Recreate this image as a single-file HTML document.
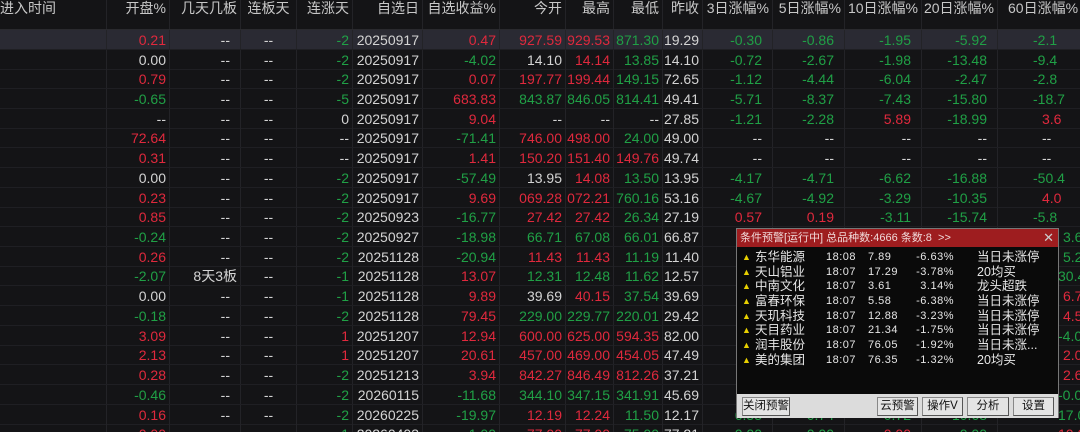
<!DOCTYPE html>
<html><head><meta charset="utf-8"><style>
*{margin:0;padding:0;box-sizing:border-box}
html,body{width:1080px;height:432px;overflow:hidden}
body{background:#141416;font-family:"Liberation Sans","Noto Sans CJK SC",sans-serif;font-size:14px;color:#d4d4d4;position:relative}
.row{position:absolute;left:0;width:1080px;height:20px;display:flex;border-bottom:1px solid #1f1f23}
.row>div{display:flex;justify-content:flex-end;align-items:center;overflow:hidden;white-space:nowrap;padding-right:3px;border-right:1px solid #232327;height:100%;flex-shrink:0}
.row>div:nth-child(1){width:107px;justify-content:flex-start;padding-left:0}
.row>div:nth-child(2){width:63px}
.row>div:nth-child(3){width:71px;padding-right:10px}
.row>div:nth-child(4){width:56px;justify-content:center;padding-right:0}
.row>div:nth-child(5){width:56px}
.row>div:nth-child(6){width:70px}
.row>div:nth-child(7){width:77px}
.row>div:nth-child(8){width:66px}
.row>div:nth-child(9){width:48px}
.row>div:nth-child(10){width:49px}
.row>div:nth-child(11){width:40px}
.row>div:nth-child(12){width:70px;padding-right:10px}
.row>div:nth-child(13){width:72px;padding-right:10px}
.row>div:nth-child(14){width:77px;padding-right:10px}
.row>div:nth-child(15){width:76px;padding-right:10px}
.row>div:nth-child(16){width:82px;justify-content:flex-start;padding-left:35px;border-right:none}
.row>div.pz:nth-child(16){padding-left:44px}
.row>div.bp:nth-child(16){padding-left:65px}
.row>div.bn:nth-child(16){padding-left:60px}
.hd{top:0;height:30px;border-bottom:1px solid #2a2a2e}
.hd>div{align-items:flex-start;color:#c8c8c8;line-height:16px}
.hd>div:nth-child(16){padding-left:10px}
.sel{background:#2a2a33}
.r{color:#e0293d}.g{color:#20a046}.w{color:#dcdcdc}
.pop{position:absolute;left:736px;top:228px;width:323px;height:190px;background:#0a0a0a;border:1px solid #777;font-size:12px}
.tt{height:18px;background:#9e1d1f;color:#f0d8d8;font-size:11px;line-height:18px;padding-left:3px;position:relative;white-space:nowrap}
.tt .x{position:absolute;right:4px;top:0;color:#ccc;font-size:13px}
.it{position:absolute;left:0;height:14px;width:100%;color:#e6e6e6;white-space:nowrap;line-height:14px}
.it span{position:absolute}
.it .ic{left:5px;color:#e8d000;font-size:9px}
.it .n{left:18px;font-size:12.5px}
.it .t{left:89px;font-size:11px;letter-spacing:.5px}
.it .p{left:131px;font-size:11px;letter-spacing:.5px}
.it .c{right:104px;font-size:11px;letter-spacing:.5px}
.it .m{left:240px;font-size:12.5px}
.bar{position:absolute;left:0;top:165px;width:100%;height:24px;background:#dcdcdc}
.bt{position:absolute;top:3px;height:19px;background:#e4e4e4;border:1px solid #888;border-right-color:#555;border-bottom-color:#555;color:#111;font-size:11.5px;line-height:17px;text-align:center;white-space:nowrap;overflow:hidden}
</style></head><body>
<div class="row hd"><div>进入时间</div><div>开盘%</div><div style="padding-right:3px">几天几板</div><div>连板天</div><div>连涨天</div><div>自选日</div><div>自选收益%</div><div>今开</div><div>最高</div><div>最低</div><div>昨收</div><div style="padding-right:3px">3日涨幅%</div><div style="padding-right:3px">5日涨幅%</div><div style="padding-right:3px">10日涨幅%</div><div style="padding-right:3px">20日涨幅%</div><div>60日涨幅%</div></div>

<div class="row sel" style="top:30px"><div></div><div class="r">0.21</div><div>--</div><div>--</div><div class="g">-2</div><div>20250917</div><div class="r">0.47</div><div class="r">927.59</div><div class="r">929.53</div><div class="g">871.30</div><div>19.29</div><div class="g">-0.30</div><div class="g">-0.86</div><div class="g">-1.95</div><div class="g">-5.92</div><div class="g">-2.1</div></div>
<div class="row" style="top:50px"><div></div><div>0.00</div><div>--</div><div>--</div><div class="g">-2</div><div>20250917</div><div class="g">-4.02</div><div>14.10</div><div class="r">14.14</div><div class="g">13.85</div><div>14.10</div><div class="g">-0.72</div><div class="g">-2.67</div><div class="g">-1.98</div><div class="g">-13.48</div><div class="g">-9.4</div></div>
<div class="row" style="top:69px"><div></div><div class="r">0.79</div><div>--</div><div>--</div><div class="g">-2</div><div>20250917</div><div class="r">0.07</div><div class="r">197.77</div><div class="r">199.44</div><div class="g">149.15</div><div>72.65</div><div class="g">-1.12</div><div class="g">-4.44</div><div class="g">-6.04</div><div class="g">-2.47</div><div class="g">-2.8</div></div>
<div class="row" style="top:89px"><div></div><div class="g">-0.65</div><div>--</div><div>--</div><div class="g">-5</div><div>20250917</div><div class="r">683.83</div><div class="g">843.87</div><div class="g">846.05</div><div class="g">814.41</div><div>49.41</div><div class="g">-5.71</div><div class="g">-8.37</div><div class="g">-7.43</div><div class="g">-15.80</div><div class="g">-18.7</div></div>
<div class="row" style="top:109px"><div></div><div>--</div><div>--</div><div>--</div><div>0</div><div>20250917</div><div class="r">9.04</div><div>--</div><div>--</div><div>--</div><div>27.85</div><div class="g">-1.21</div><div class="g">-2.28</div><div class="r">5.89</div><div class="g">-18.99</div><div class="r pz">3.6</div></div>
<div class="row" style="top:128px"><div></div><div class="r">72.64</div><div>--</div><div>--</div><div>--</div><div>20250917</div><div class="g">-71.41</div><div class="r">746.00</div><div class="r">498.00</div><div class="g">24.00</div><div>49.00</div><div>--</div><div>--</div><div>--</div><div>--</div><div class="pz">--</div></div>
<div class="row" style="top:148px"><div></div><div class="r">0.31</div><div>--</div><div>--</div><div>--</div><div>20250917</div><div class="r">1.41</div><div class="r">150.20</div><div class="r">151.40</div><div class="r">149.76</div><div>49.74</div><div>--</div><div>--</div><div>--</div><div>--</div><div class="pz">--</div></div>
<div class="row" style="top:168px"><div></div><div>0.00</div><div>--</div><div>--</div><div class="g">-2</div><div>20250917</div><div class="g">-57.49</div><div>13.95</div><div class="r">14.08</div><div class="g">13.50</div><div>13.95</div><div class="g">-4.17</div><div class="g">-4.71</div><div class="g">-6.62</div><div class="g">-16.88</div><div class="g">-50.4</div></div>
<div class="row" style="top:188px"><div></div><div class="r">0.23</div><div>--</div><div>--</div><div class="g">-2</div><div>20250917</div><div class="r">9.69</div><div class="r">069.28</div><div class="r">072.21</div><div class="g">760.16</div><div>53.16</div><div class="g">-4.67</div><div class="g">-4.92</div><div class="g">-3.29</div><div class="g">-10.35</div><div class="r pz">4.0</div></div>
<div class="row" style="top:207px"><div></div><div class="r">0.85</div><div>--</div><div>--</div><div class="g">-2</div><div>20250923</div><div class="g">-16.77</div><div class="r">27.42</div><div class="r">27.42</div><div class="g">26.34</div><div>27.19</div><div class="r">0.57</div><div class="r">0.19</div><div class="g">-3.11</div><div class="g">-15.74</div><div class="g">-5.8</div></div>
<div class="row" style="top:227px"><div></div><div class="g">-0.24</div><div>--</div><div>--</div><div class="g">-2</div><div>20250927</div><div class="g">-18.98</div><div class="g">66.71</div><div class="g">67.08</div><div class="g">66.01</div><div>66.87</div><div></div><div></div><div></div><div></div><div class="g bp">3.6</div></div>
<div class="row" style="top:247px"><div></div><div class="r">0.26</div><div>--</div><div>--</div><div class="g">-2</div><div>20251128</div><div class="g">-20.94</div><div class="r">11.43</div><div class="r">11.43</div><div class="g">11.19</div><div>11.40</div><div></div><div></div><div></div><div></div><div class="g bp">5.2</div></div>
<div class="row" style="top:266px"><div></div><div class="g">-2.07</div><div style="padding-right:3px">8天3板</div><div>--</div><div class="g">-1</div><div>20251128</div><div class="r">13.07</div><div class="g">12.31</div><div class="g">12.48</div><div class="g">11.62</div><div>12.57</div><div></div><div></div><div></div><div></div><div class="g bn">30.4</div></div>
<div class="row" style="top:286px"><div></div><div>0.00</div><div>--</div><div>--</div><div class="g">-1</div><div>20251128</div><div class="r">9.89</div><div>39.69</div><div class="r">40.15</div><div class="g">37.54</div><div>39.69</div><div></div><div></div><div></div><div></div><div class="r bp">6.7</div></div>
<div class="row" style="top:306px"><div></div><div class="g">-0.18</div><div>--</div><div>--</div><div class="g">-2</div><div>20251128</div><div class="r">79.45</div><div class="g">229.00</div><div class="g">229.77</div><div class="g">220.01</div><div>29.42</div><div></div><div></div><div></div><div></div><div class="r bp">4.5</div></div>
<div class="row" style="top:326px"><div></div><div class="r">3.09</div><div>--</div><div>--</div><div class="r">1</div><div>20251207</div><div class="r">12.94</div><div class="r">600.00</div><div class="r">625.00</div><div class="r">594.35</div><div>82.00</div><div></div><div></div><div></div><div></div><div class="g bn">-4.0</div></div>
<div class="row" style="top:345px"><div></div><div class="r">2.13</div><div>--</div><div>--</div><div class="r">1</div><div>20251207</div><div class="r">20.61</div><div class="r">457.00</div><div class="r">469.00</div><div class="r">454.05</div><div>47.49</div><div></div><div></div><div></div><div></div><div class="r bp">2.0</div></div>
<div class="row" style="top:365px"><div></div><div class="r">0.28</div><div>--</div><div>--</div><div class="g">-2</div><div>20251213</div><div class="r">3.94</div><div class="r">842.27</div><div class="r">846.49</div><div class="r">812.26</div><div>37.21</div><div></div><div></div><div></div><div></div><div class="r bp">2.6</div></div>
<div class="row" style="top:385px"><div></div><div class="g">-0.46</div><div>--</div><div>--</div><div class="g">-2</div><div>20260115</div><div class="g">-11.68</div><div class="g">344.10</div><div class="g">347.15</div><div class="g">341.91</div><div>45.69</div><div></div><div></div><div></div><div></div><div class="g bn">-0.0</div></div>
<div class="row" style="top:405px"><div></div><div class="r">0.16</div><div>--</div><div>--</div><div class="g">-2</div><div>20260225</div><div class="g">-19.97</div><div class="r">12.19</div><div class="r">12.24</div><div class="g">11.50</div><div>12.17</div><div class="g">6.55</div><div class="g">0.74</div><div class="g">0.72</div><div class="g">10.68</div><div class="g bn">17.0</div></div>
<div class="row" style="top:424px"><div></div><div class="r">0.00</div><div>--</div><div>--</div><div class="g">-1</div><div>20260403</div><div class="g">-1.00</div><div class="r">77.00</div><div class="r">77.00</div><div class="g">75.00</div><div>77.21</div><div class="g">0.00</div><div class="g">0.00</div><div class="r">0.00</div><div class="g">0.00</div><div class="r bn">10.0</div></div>

<div class="pop">
<div class="tt">条件预警[运行中] 总品种数:4666 条数:8 &nbsp;&gt;&gt;<span class="x">✕</span></div>
<div class="it" style="top:21px"><span class="ic">▲</span><span class="n">东华能源</span><span class="t">18:08</span><span class="p">7.89</span><span class="c">-6.63%</span><span class="m">当日未涨停</span></div>
<div class="it" style="top:36px"><span class="ic">▲</span><span class="n">天山铝业</span><span class="t">18:07</span><span class="p">17.29</span><span class="c">-3.78%</span><span class="m">20均买</span></div>
<div class="it" style="top:50px"><span class="ic">▲</span><span class="n">中南文化</span><span class="t">18:07</span><span class="p">3.61</span><span class="c">3.14%</span><span class="m">龙头超跌</span></div>
<div class="it" style="top:65px"><span class="ic">▲</span><span class="n">富春环保</span><span class="t">18:07</span><span class="p">5.58</span><span class="c">-6.38%</span><span class="m">当日未涨停</span></div>
<div class="it" style="top:80px"><span class="ic">▲</span><span class="n">天玑科技</span><span class="t">18:07</span><span class="p">12.88</span><span class="c">-3.23%</span><span class="m">当日未涨停</span></div>
<div class="it" style="top:94px"><span class="ic">▲</span><span class="n">天目药业</span><span class="t">18:07</span><span class="p">21.34</span><span class="c">-1.75%</span><span class="m">当日未涨停</span></div>
<div class="it" style="top:109px"><span class="ic">▲</span><span class="n">润丰股份</span><span class="t">18:07</span><span class="p">76.05</span><span class="c">-1.92%</span><span class="m">当日未涨...</span></div>
<div class="it" style="top:124px"><span class="ic">▲</span><span class="n">美的集团</span><span class="t">18:07</span><span class="p">76.35</span><span class="c">-1.32%</span><span class="m">20均买</span></div>
<div class="bar">
<div class="bt" style="left:5px;width:48px">关闭预警</div>
<div class="bt" style="left:140px;width:41px">云预警</div>
<div class="bt" style="left:185px;width:41px">操作V</div>
<div class="bt" style="left:230px;width:42px">分析</div>
<div class="bt" style="left:276px;width:41px">设置</div>
</div>
</div>
</body></html>
